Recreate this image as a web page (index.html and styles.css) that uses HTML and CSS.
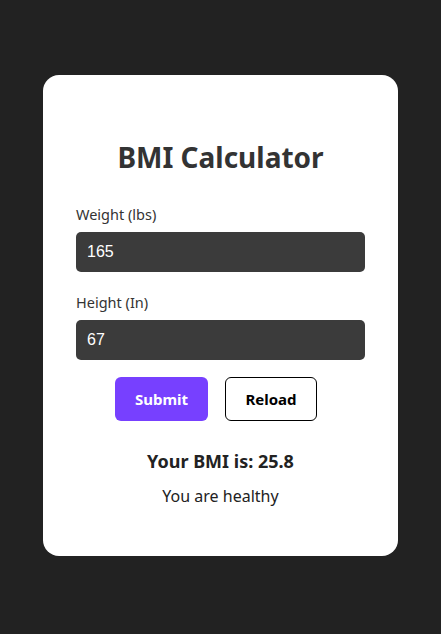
FILE: index.html
```html
<!DOCTYPE html>
<html lang="en">
<head>
<meta charset="utf-8">
<title>BMI Calculator</title>
<link rel="stylesheet" href="styles.css">
</head>
<body>
<div class="card">
  <h1 class="title">BMI Calculator</h1>
  <form class="form">
    <label class="label" for="w">Weight (lbs)</label>
    <input class="input" id="w" type="text" value="165">
    <label class="label" for="h">Height (In)</label>
    <input class="input" id="h" type="text" value="67">
    <div class="actions">
      <button type="button" class="btn btn-primary">Submit</button>
      <button type="button" class="btn btn-outline">Reload</button>
    </div>
  </form>
  <div class="result">Your BMI is: 25.8</div>
  <div class="message">You are healthy</div>
</div>
</body>
</html>
```
FILE: styles.css
```css
* { box-sizing: border-box; }
html, body { margin: 0; height: 100%; }
body {
  background: #222222;
  display: flex;
  align-items: center;
  justify-content: center;
  font-family: "Noto Sans", "Open Sans", sans-serif;
  color: #333;
}
.card {
  width: 355px;
  height: 481px;
  background: #fff;
  border-radius: 16px;
  padding: 60px 33px 0;
  margin-top: -3px;
}
.title {
  margin: 0;
  text-align: center;
  font-size: 28px;
  font-weight: 700;
  line-height: 44px;
  color: #333;
}
.form { display: flex; flex-direction: column; margin-top: 25px; }
.label {
  font-size: 14.5px;
  line-height: 20px;
  color: #333;
  margin-bottom: 8px;
}
.input {
  height: 40px;
  border: none;
  border-radius: 5px;
  background: #3b3b3b;
  color: #fff;
  font-family: "Liberation Sans", Arial, sans-serif;
  font-size: 16px;
  padding: 0 11px;
  margin-bottom: 20px;
  outline: none;
}
.input:last-of-type { margin-bottom: 17px; }
.actions {
  display: flex;
  justify-content: center;
  gap: 17px;
  padding-right: 9px;
}
.btn {
  height: 44px;
  border-radius: 6px;
  font-family: "Noto Sans", "Open Sans", sans-serif;
  font-size: 15px;
  font-weight: 700;
  cursor: pointer;
}
.btn-primary {
  width: 93px;
  background: #7740ff;
  color: #fff;
  border: none;
}
.btn-outline {
  width: 92px;
  background: #fff;
  color: #000;
  border: 1px solid #000;
}
.result {
  text-align: center;
  font-size: 18px;
  font-weight: 700;
  line-height: 26px;
  margin-top: 27px;
  color: #222;
}
.message {
  text-align: center;
  font-size: 16px;
  line-height: 22px;
  margin-top: 11px;
  color: #222;
}
```
